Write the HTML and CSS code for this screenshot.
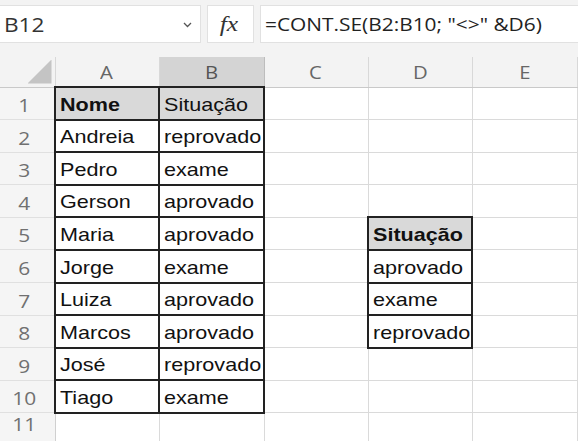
FILE: index.html
```html
<!DOCTYPE html>
<html lang="pt-BR">
<head>
  <meta charset="UTF-8" />
  <meta name="viewport" content="width=device-width, initial-scale=1.0" />
  <title>Planilha - CONT.SE</title>
  <link rel="stylesheet" href="styles.css">
</head>
<body>
  <div class="toolbar">
    <div class="namebox">
      <span class="t">B12</span>
      <svg class="chevron" width="9" height="6" viewBox="0 0 9 6">
        <polyline points="1,1 4.5,4.5 8,1" fill="none" stroke="#555" stroke-width="1.3" />
      </svg>
    </div>
    <div class="fx"><span class="t">fx</span></div>
    <div class="formula"><span class="t">=CONT.SE(B2:B10; "&lt;&gt;" &amp;D6)</span></div>
  </div>

  <div class="sheet-wrap">
    <table class="sheet">
      <colgroup>
        <col class="c-row">
        <col class="c-a">
        <col class="c-b">
        <col class="c-c">
        <col class="c-d">
        <col class="c-e">
        <col class="c-f">
      </colgroup>
      <thead>
        <tr>
          <th class="corner"><div class="tri"></div></th>
          <th><span class="t">A</span></th>
          <th class="sel"><span class="t">B</span></th>
          <th><span class="t">C</span></th>
          <th><span class="t">D</span></th>
          <th><span class="t">E</span></th>
          <th></th>
        </tr>
      </thead>
      <tbody>
        <tr>
          <th><span class="t">1</span></th>
          <td class="box head bold"><span class="t">Nome</span></td>
          <td class="box head"><span class="t">Situação</span></td>
          <td></td><td></td><td></td><td></td>
        </tr>
        <tr>
          <th><span class="t">2</span></th>
          <td class="box"><span class="t">Andreia</span></td>
          <td class="box"><span class="t">reprovado</span></td>
          <td></td><td></td><td></td><td></td>
        </tr>
        <tr>
          <th><span class="t">3</span></th>
          <td class="box"><span class="t">Pedro</span></td>
          <td class="box"><span class="t">exame</span></td>
          <td></td><td></td><td></td><td></td>
        </tr>
        <tr>
          <th><span class="t">4</span></th>
          <td class="box"><span class="t">Gerson</span></td>
          <td class="box"><span class="t">aprovado</span></td>
          <td></td><td></td><td></td><td></td>
        </tr>
        <tr>
          <th><span class="t">5</span></th>
          <td class="box"><span class="t">Maria</span></td>
          <td class="box"><span class="t">aprovado</span></td>
          <td></td>
          <td class="box head bold"><span class="t">Situação</span></td>
          <td></td><td></td>
        </tr>
        <tr>
          <th><span class="t">6</span></th>
          <td class="box"><span class="t">Jorge</span></td>
          <td class="box"><span class="t">exame</span></td>
          <td></td>
          <td class="box"><span class="t">aprovado</span></td>
          <td></td><td></td>
        </tr>
        <tr>
          <th><span class="t">7</span></th>
          <td class="box"><span class="t">Luiza</span></td>
          <td class="box"><span class="t">aprovado</span></td>
          <td></td>
          <td class="box"><span class="t">exame</span></td>
          <td></td><td></td>
        </tr>
        <tr>
          <th><span class="t">8</span></th>
          <td class="box"><span class="t">Marcos</span></td>
          <td class="box"><span class="t">aprovado</span></td>
          <td></td>
          <td class="box"><span class="t">reprovado</span></td>
          <td></td><td></td>
        </tr>
        <tr>
          <th><span class="t">9</span></th>
          <td class="box"><span class="t">José</span></td>
          <td class="box"><span class="t">reprovado</span></td>
          <td></td><td></td><td></td><td></td>
        </tr>
        <tr>
          <th><span class="t">10</span></th>
          <td class="box"><span class="t">Tiago</span></td>
          <td class="box"><span class="t">exame</span></td>
          <td></td><td></td><td></td><td></td>
        </tr>
        <tr class="last">
          <th><span class="t">11</span></th>
          <td></td><td></td><td></td><td></td><td></td><td></td>
        </tr>
      </tbody>
    </table>
  </div>
</body>
</html>
```

FILE: styles.css
```css
body {
  margin: 0;
  width: 578px;
  height: 441px;
  overflow: hidden;
  background-color: #fff;
  font-family: "Open Sans", "Noto Sans", sans-serif;
}

/* glyphs in this sheet are drawn a bit wide */
.t {
  display: inline-block;
  transform: scaleX(1.16);
  transform-origin: 0 50%;
  white-space: nowrap;
}

/* formula bar */
.toolbar {
  display: flex;
  height: 57px;
  padding-top: 5px;
  box-sizing: border-box;
  background-color: #f3f3f3;
}
.namebox,
.fx,
.formula {
  height: 38px;
  box-sizing: border-box;
  background-color: #fff;
  border: 1px solid #e1e1e1;
  display: flex;
  align-items: center;
}
.namebox {
  width: 202px;
  margin-left: -1px;
  padding-left: 4px;
  font-size: 19.5px;
  color: #333;
}
.chevron {
  margin-left: auto;
  margin-right: 8px;
  margin-top: 1px;
}
.fx {
  width: 47px;
  margin-left: 6px;
  justify-content: center;
  font-family: "Liberation Serif", "DejaVu Serif", serif;
  font-style: italic;
  font-size: 22px;
  color: #333;
}
.fx .t {
  transform-origin: 50% 50%;
  margin-right: 3px;
}
.formula {
  flex: 1;
  margin-left: 6px;
  margin-right: -2px;
  padding-left: 4px;
  font-size: 18px;
  color: #222;
}

/* grid */
.sheet-wrap {
  overflow: hidden;
  width: 578px;
}
.sheet {
  border-collapse: collapse;
  table-layout: fixed;
  width: 617px;
}
.c-row { width: 55px; }
.c-a { width: 104px; }
.c-b { width: 105px; }
.c-c { width: 104px; }
.c-d { width: 104px; }
.c-e { width: 105px; }
.c-f { width: 40px; }

thead tr {
  height: 30px;
}
thead th {
  padding: 0;
  background-color: #f3f3f3;
  border-right: 1px solid #d8d8d8;
  border-bottom: 1px solid #c9c9c9;
  font-weight: normal;
  font-size: 17.5px;
  color: #666;
  text-align: center;
  vertical-align: middle;
}
thead th .t {
  transform-origin: 50% 50%;
}
thead th.sel {
  background-color: #d4d4d4;
  border-right-color: #bdbdbd;
  border-left: 1px solid #bdbdbd;
  color: #555;
}
.corner {
  vertical-align: bottom;
}
.tri {
  width: 24px;
  height: 24px;
  margin: 0 3px 3px auto;
  background-color: #c4c4c4;
  clip-path: polygon(100% 0, 100% 100%, 0 100%);
}

tbody tr {
  height: 32.6px;
}
tbody th {
  padding: 0 6px 3px 0;
  background-color: #f5f5f5;
  border-right: 1px solid #d0d0d0;
  border-bottom: 1px solid #e0e0e0;
  font-weight: normal;
  font-size: 18px;
  color: #707070;
  text-align: center;
  vertical-align: bottom;
  line-height: 22px;
}
tbody th .t {
  transform-origin: 50% 50%;
}
/* the bottom row is cut by the window, so its number sits higher */
tbody tr.last th {
  vertical-align: top;
  padding-top: 0;
  padding-bottom: 0;
}
td {
  padding: 0 0 4px 4px;
  border: 1px solid #dadada;
  font-family: "Liberation Sans", Arial, sans-serif;
  font-size: 18.6px;
  line-height: 20px;
  color: #111;
  vertical-align: bottom;
  overflow: visible;
}
td.box {
  border: 2px solid #222;
}
td.head {
  background-color: #d9d9d9;
}
td.bold {
  font-weight: bold;
}
```
